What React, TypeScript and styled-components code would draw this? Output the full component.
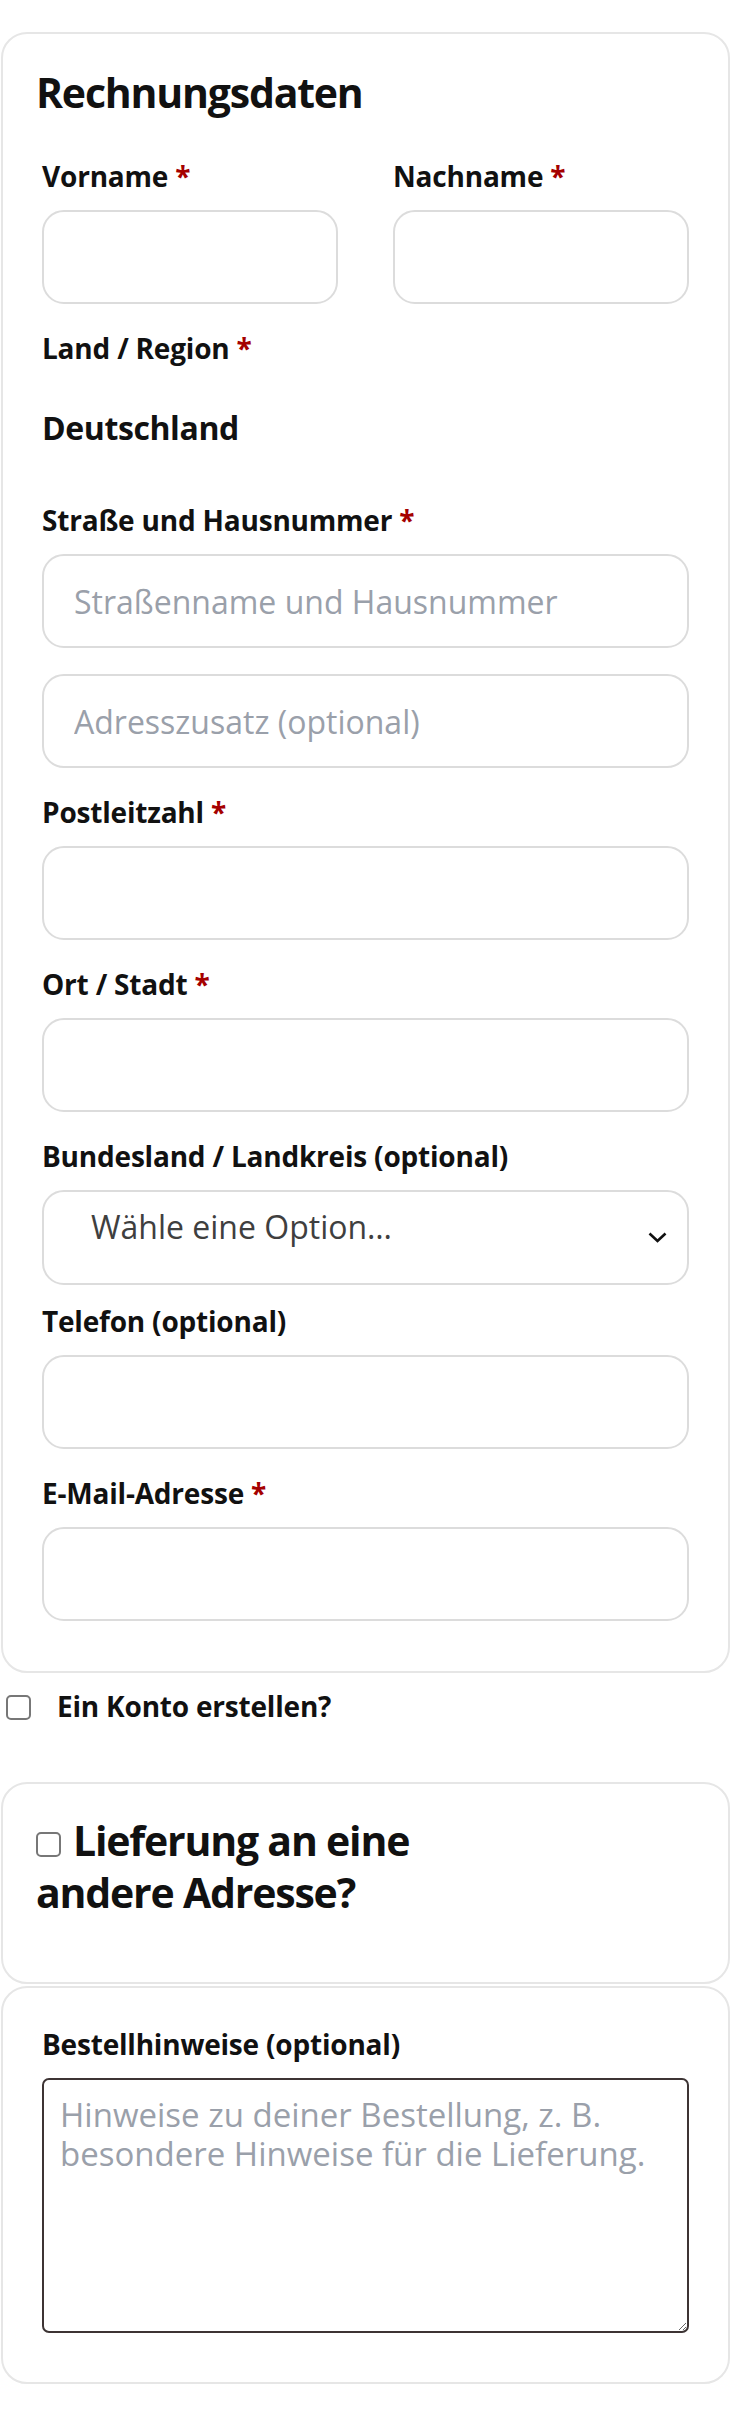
import styled, { createGlobalStyle } from "styled-components";

const GlobalStyle = createGlobalStyle`
  body {
    margin: 0;
    background: #ffffff;
    font-family: "Open Sans", "Noto Sans", sans-serif;
    color: #111111;
  }
  * {
    box-sizing: border-box;
  }
`;

const Page = styled.div`
  width: 732px;
  padding: 32px 2px 33px 1px;
`;

const Card = styled.section<{ $top?: number; $bottom?: number }>`
  border: 2px solid #e6e6e6;
  border-radius: 26px;
  padding: ${(p) => p.$top ?? 32}px 33px ${(p) => p.$bottom ?? 50}px 33px;
  display: flex;
  flex-direction: column;
`;

const Heading = styled.h3`
  margin: 0;
  font-size: 41px;
  line-height: 52px;
  font-weight: 700;
  letter-spacing: -1.2px;
  color: #111111;
`;

const ShipHeading = styled(Heading)`
  max-width: 420px;
`;

const Fields = styled.div`
  display: flex;
  flex-direction: column;
  padding: 40px 6px 0 6px;
`;

const Field = styled.div<{ $gap?: number }>`
  display: flex;
  flex-direction: column;
  margin-bottom: ${(p) => p.$gap ?? 26}px;
  &:last-child {
    margin-bottom: 0;
  }
`;

const Row = styled.div`
  display: grid;
  grid-template-columns: 1fr 1fr;
  align-items: start;
  gap: 55px;
  margin-bottom: 26px;
  & > ${Field} {
    margin-bottom: 0;
  }
`;

const Label = styled.label`
  font-size: 28px;
  line-height: 36px;
  font-weight: 700;
  color: #111111;
  margin-bottom: 16px;
  letter-spacing: -0.2px;
`;

const Req = styled.span`
  color: #a50000;
  margin-left: 7px;
`;

const Country = styled.strong`
  display: block;
  font-size: 32px;
  line-height: 44px;
  font-weight: 700;
  letter-spacing: -0.4px;
  margin: 24px 0 52px;
`;

const Input = styled.input`
  width: 100%;
  height: 94px;
  border: 2px solid #dcdcdc;
  border-radius: 22px;
  padding: 0 30px;
  font-family: "Open Sans", "Noto Sans", sans-serif;
  font-size: 32px;
  color: #222222;
  background: #ffffff;
  outline: none;
  & + & {
    margin-top: 26px;
  }
  &::placeholder {
    color: #9aa0aa;
    opacity: 1;
  }
`;

const SelectWrap = styled.div`
  position: relative;
`;

const Select = styled.select`
  width: 100%;
  height: 95px;
  appearance: none;
  border: 2px solid #dcdcdc;
  border-radius: 22px;
  padding: 0 60px 22px 47px;
  font-family: "Open Sans", "Noto Sans", sans-serif;
  font-size: 32px;
  color: #3f3f3f;
  background: #ffffff;
  outline: none;
`;

const Chevron = styled.svg`
  position: absolute;
  right: 22px;
  top: 42px;
  pointer-events: none;
`;

const CheckRow = styled.label`
  display: flex;
  align-items: center;
  gap: 26px;
  padding: 15px 0 58px 5px;
  font-size: 28px;
  line-height: 36px;
  font-weight: 700;
  letter-spacing: -0.2px;
`;

const Box = styled.input`
  appearance: none;
  margin: 0;
  flex: none;
  width: 25px;
  height: 25px;
  border: 2px solid #777777;
  border-radius: 5px;
  background: #ffffff;
  vertical-align: -1px;
`;

const RowBox = styled(Box)`
  margin-top: 2px;
`;

const InlineBox = styled(Box)`
  margin-right: 12px;
`;

const NotesField = styled.div`
  display: flex;
  flex-direction: column;
  padding: 0 6px;
`;

const TextArea = styled.textarea`
  width: 100%;
  height: 255px;
  border: 2px solid #3d3434;
  border-radius: 7px;
  padding: 15px 16px;
  font-family: "Open Sans", "Noto Sans", sans-serif;
  font-size: 33px;
  line-height: 39px;
  color: #222222;
  outline: none;
  &::placeholder {
    color: #9aa0aa;
    opacity: 1;
  }
`;

export default function App() {
  return (
    <Page>
      <GlobalStyle />
      <Card>
        <Heading>Rechnungsdaten</Heading>
        <Fields>
          <Row>
            <Field>
              <Label>
                Vorname<Req>*</Req>
              </Label>
              <Input type="text" />
            </Field>
            <Field>
              <Label>
                Nachname<Req>*</Req>
              </Label>
              <Input type="text" />
            </Field>
          </Row>
          <Field $gap={0}>
            <Label>
              Land / Region<Req>*</Req>
            </Label>
            <Country>Deutschland</Country>
          </Field>
          <Field>
            <Label>
              Straße und Hausnummer<Req>*</Req>
            </Label>
            <Input type="text" placeholder="Straßenname und Hausnummer" />
            <Input type="text" placeholder="Adresszusatz (optional)" />
          </Field>
          <Field>
            <Label>
              Postleitzahl<Req>*</Req>
            </Label>
            <Input type="text" />
          </Field>
          <Field>
            <Label>
              Ort / Stadt<Req>*</Req>
            </Label>
            <Input type="text" />
          </Field>
          <Field $gap={18}>
            <Label>Bundesland / Landkreis (optional)</Label>
            <SelectWrap>
              <Select defaultValue="">
                <option value="">Wähle eine Option…</option>
              </Select>
              <Chevron width="19" height="11" viewBox="0 0 19 11">
                <path d="M1.5 1.5 L9.5 9 L17.5 1.5" fill="none" stroke="#111" strokeWidth="2.6" />
              </Chevron>
            </SelectWrap>
          </Field>
          <Field>
            <Label>Telefon (optional)</Label>
            <Input type="tel" />
          </Field>
          <Field>
            <Label>
              E-Mail-Adresse<Req>*</Req>
            </Label>
            <Input type="email" />
          </Field>
        </Fields>
      </Card>

      <CheckRow>
        <RowBox type="checkbox" />
        Ein Konto erstellen?
      </CheckRow>

      <Card $top={30} $bottom={64}>
        <ShipHeading>
          <InlineBox type="checkbox" />
          Lieferung an eine andere Adresse?
        </ShipHeading>
      </Card>

      <Card $top={38} $bottom={49} style={{ marginTop: 2 }}>
        <NotesField>
          <Label>Bestellhinweise (optional)</Label>
          <TextArea placeholder="Hinweise zu deiner Bestellung, z. B. besondere Hinweise für die Lieferung." />
        </NotesField>
      </Card>
    </Page>
  );
}
